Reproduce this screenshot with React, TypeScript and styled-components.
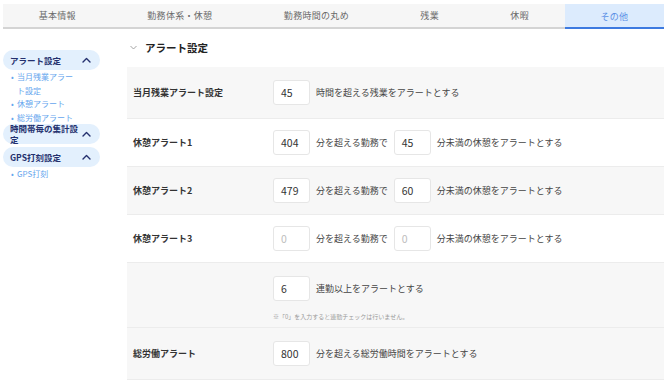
import React from "react";
import styled, { createGlobalStyle } from "styled-components";

const Global = createGlobalStyle`
  html, body { margin: 0; padding: 0; background: #fff; }
  body { font-family: "Noto Sans CJK JP", "Noto Sans", sans-serif; color: #333; }
  * { box-sizing: border-box; }
`;

const Page = styled.div`
  width: 670px;
  height: 380px;
  padding: 4px 6px 0 3px;
  overflow: hidden;
`;

const TabBar = styled.div`
  display: flex;
  background: #f6f6f6;
  border-bottom: 2px solid #d4d4d4;
  height: 25px;
`;

const Tab = styled.div<{ $active?: boolean }>`
  flex: 1 1 auto;
  display: flex;
  align-items: center;
  justify-content: center;
  font-size: 9px;
  color: ${(p) => (p.$active ? "#5a8fe6" : "#6a6a6a")};
  background: ${(p) => (p.$active ? "#dcebfd" : "transparent")};
  box-shadow: ${(p) => (p.$active ? "inset 0 -2px 0 #3d7ae0" : "none")};
  margin-bottom: ${(p) => (p.$active ? "-2px" : "0")};
  letter-spacing: 0.3px;
`;

const Body = styled.div`
  display: flex;
`;

const Sidebar = styled.nav`
  width: 97px;
  flex: none;
  padding-top: 21px;
`;

const Pill = styled.div`
  height: 20px;
  border-radius: 10px;
  background: #e3f0fd;
  display: flex;
  align-items: center;
  padding: 0 9px 0 7px;
  font-size: 8.5px;
  font-weight: 700;
  color: #24306e;
  line-height: 11px;
`;

const PillText = styled.span`
  flex: 1;
  max-width: 74px;
`;

const PillChevron = styled.svg`
  width: 9px;
  height: 6px;
  margin-left: auto;
  flex: none;
`;

const SubList = styled.ul`
  list-style: none;
  margin: 0;
  padding: 0 0 0 8px;
  min-height: 3px;
`;

const SubItem = styled.li`
  font-size: 8px;
  line-height: 13.5px;
  color: #66a6ee;
  display: flex;
  width: 66px;
  &::before {
    content: "•";
    width: 6px;
    flex: none;
  }
`;

const Main = styled.main`
  flex: 1;
  margin-left: 27px;
`;

const Heading = styled.h2`
  margin: 9px 0 10px;
  height: 19px;
  display: flex;
  align-items: center;
  gap: 8px;
  font-size: 10.5px;
  font-weight: 700;
  color: #222;
  padding-left: 3px;
`;

const HeadingChevron = styled.svg`
  width: 7px;
  height: 5px;
`;

const Table = styled.div`
  display: flex;
  flex-direction: column;
`;

const Row = styled.div<{ $gray?: boolean; $pad: number; $padBottom?: number }>`
  display: flex;
  align-items: flex-start;
  background: ${(p) => (p.$gray ? "#f7f7f7" : "#fff")};
  border-bottom: 1px solid #ececec;
  padding: ${(p) => p.$pad}px 0 ${(p) => p.$padBottom ?? p.$pad}px;
`;

const Label = styled.div`
  width: 146px;
  flex: none;
  padding-left: 6px;
  font-size: 9px;
  font-weight: 700;
  color: #333;
  height: 25px;
  display: flex;
  align-items: center;
`;

const Cell = styled.div`
  display: flex;
  flex-direction: column;
`;

const Line = styled.div`
  display: flex;
  align-items: center;
  gap: 6px;
  height: 25px;
`;

const Input = styled.div<{ $placeholder?: boolean }>`
  width: 37px;
  height: 25px;
  background: #fff;
  border: 1px solid #e6e6e6;
  border-radius: 3px;
  display: flex;
  align-items: center;
  padding-left: 7px;
  font-size: 10.5px;
  color: ${(p) => (p.$placeholder ? "#bdbdbd" : "#333")};
`;

const Text = styled.span`
  font-size: 9px;
  color: #444;
`;

const Note = styled.div`
  font-size: 6px;
  color: #9a9a9a;
  margin-top: 12px;
  line-height: 8px;
`;

const Up = () => (
  <PillChevron viewBox="0 0 9 6">
    <polyline points="1,5 4.5,1.5 8,5" fill="none" stroke="#24306e" strokeWidth="1.4" strokeLinecap="round" strokeLinejoin="round" />
  </PillChevron>
);

const tabs = ["基本情報", "勤務体系・休憩", "勤務時間の丸め", "残業", "休暇", "その他"];

const sections: { title: string; items: string[] }[] = [
  { title: "アラート設定", items: ["当月残業アラート設定", "休憩アラート", "総労働アラート"] },
  { title: "時間帯毎の集計設定", items: [] },
  { title: "GPS打刻設定", items: ["GPS打刻"] },
];

export default function App() {
  return (
    <Page>
      <Global />
      <TabBar>
        {tabs.map((t, i) => (
          <Tab key={t} $active={i === tabs.length - 1}>
            {t}
          </Tab>
        ))}
      </TabBar>
      <Body>
        <Sidebar>
          {sections.map((s) => (
            <div key={s.title}>
              <Pill>
                <PillText>{s.title}</PillText>
                <Up />
              </Pill>
              <SubList>
                {s.items.map((it) => (
                  <SubItem key={it}>{it}</SubItem>
                ))}
              </SubList>
            </div>
          ))}
        </Sidebar>
        <Main>
          <Heading>
            <HeadingChevron viewBox="0 0 7 5">
              <polyline points="0.5,1 3.5,4 6.5,1" fill="none" stroke="#9a9a9a" strokeWidth="0.9" />
            </HeadingChevron>
            アラート設定
          </Heading>
          <Table>
            <Row $gray $pad={13}>
              <Label>当月残業アラート設定</Label>
              <Line>
                <Input>45</Input>
                <Text>時間を超える残業をアラートとする</Text>
              </Line>
            </Row>
            <Row $pad={11}>
              <Label>休憩アラート1</Label>
              <Line>
                <Input>404</Input>
                <Text>分を超える勤務で</Text>
                <Input>45</Input>
                <Text>分未満の休憩をアラートとする</Text>
              </Line>
            </Row>
            <Row $gray $pad={11}>
              <Label>休憩アラート2</Label>
              <Line>
                <Input>479</Input>
                <Text>分を超える勤務で</Text>
                <Input>60</Input>
                <Text>分未満の休憩をアラートとする</Text>
              </Line>
            </Row>
            <Row $pad={11}>
              <Label>休憩アラート3</Label>
              <Line>
                <Input $placeholder>0</Input>
                <Text>分を超える勤務で</Text>
                <Input $placeholder>0</Input>
                <Text>分未満の休憩をアラートとする</Text>
              </Line>
            </Row>
            <Row $gray $pad={13} $padBottom={6}>
              <Label />
              <Cell>
                <Line>
                  <Input>6</Input>
                  <Text>連勤以上をアラートとする</Text>
                </Line>
                <Note>※「0」を入力すると連勤チェックは行いません。</Note>
              </Cell>
            </Row>
            <Row $gray $pad={13}>
              <Label>総労働アラート</Label>
              <Line>
                <Input>800</Input>
                <Text>分を超える総労働時間をアラートとする</Text>
              </Line>
            </Row>
          </Table>
        </Main>
      </Body>
    </Page>
  );
}
